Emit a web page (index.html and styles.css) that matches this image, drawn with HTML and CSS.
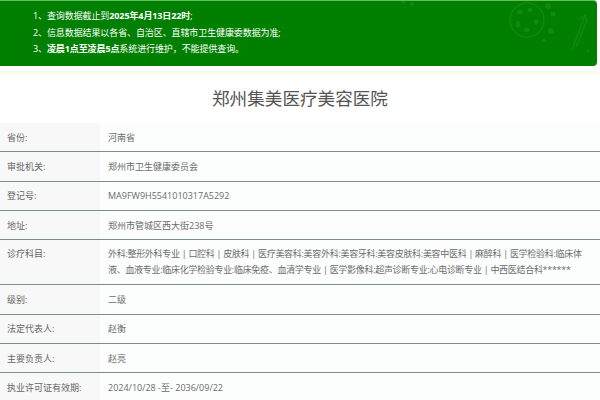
FILE: index.html
```
<!DOCTYPE html>
<html lang="zh-CN">
<head>
<meta charset="utf-8">
<title>郑州集美医疗美容医院</title>
<link rel="stylesheet" href="styles.css">
</head>
<body>
<div class="notice">
  <svg class="deco" width="600" height="66" viewBox="0 0 600 66" aria-hidden="true">
    <g fill="none" stroke="#1f8f1f" stroke-width="1.6" opacity="0.6">
      <circle cx="527" cy="20" r="17"/>
      <path d="M572 50 L584 18 M579 20 L585 15 L587 23 M576 47 L587 20"/>
    </g>
    <g fill="#1f8f1f" opacity="0.6">
      <ellipse cx="520" cy="12" rx="3" ry="2"/>
      <ellipse cx="530" cy="10" rx="2.5" ry="2"/>
      <ellipse cx="518" cy="24" rx="2.5" ry="3"/>
      <ellipse cx="527" cy="30" rx="3" ry="2"/>
      <ellipse cx="536" cy="22" rx="2" ry="3"/>
      <circle cx="548" cy="6" r="3"/>
      <circle cx="553" cy="14" r="2.5"/>
      <circle cx="551" cy="31" r="3"/>
      <circle cx="544" cy="40" r="1.5"/>
      <circle cx="588" cy="51" r="1.2"/>
      <circle cx="403" cy="2" r="2"/>
      <circle cx="412" cy="4" r="2"/>
    </g>
  </svg>
  <p class="line">1、查询数据截止到<b>2025年4月13日22时</b>;</p>
  <p class="line">2、信息数据结果以各省、自治区、直辖市卫生健康委数据为准;</p>
  <p class="line">3、<b>凌晨1点至凌晨5点</b>系统进行维护，不能提供查询。</p>
</div>
<div class="sep"></div>
<h1 class="title">郑州集美医疗美容医院</h1>
<div class="table">
  <div class="row"><div class="label">省份:</div><div class="value">河南省</div></div>
  <div class="row"><div class="label">审批机关:</div><div class="value">郑州市卫生健康委员会</div></div>
  <div class="row"><div class="label">登记号:</div><div class="value">MA9FW9H5541010317A5292</div></div>
  <div class="row"><div class="label">地址:</div><div class="value">郑州市管城区西大街238号</div></div>
  <div class="row tall"><div class="label">诊疗科目:</div><div class="value multi">外科:整形外科专业 | 口腔科 | 皮肤科 | 医疗美容科:美容外科:美容牙科:美容皮肤科:美容中医科 | 麻醉科 | 医学检验科:临床体<br>液、血液专业:临床化学检验专业:临床免疫、血清学专业 | 医学影像科:超声诊断专业:心电诊断专业 | 中西医结合科******</div></div>
  <div class="row"><div class="label">级别:</div><div class="value">二级</div></div>
  <div class="row"><div class="label">法定代表人:</div><div class="value">赵衡</div></div>
  <div class="row"><div class="label">主要负责人:</div><div class="value">赵亮</div></div>
  <div class="row last"><div class="label">执业许可证有效期:</div><div class="value">2024/10/28 -至- 2036/09/22</div></div>
</div>
</body>
</html>
```
FILE: styles.css
```
html, body {
  margin: 0;
  padding: 0;
  background: #ffffff;
}
body {
  font-family: "Open Sans", "Noto Sans CJK SC", sans-serif;
  color: #555;
}
.notice {
  position: relative;
  width: 597px;
  height: 66px;
  box-sizing: border-box;
  background: #007f00;
  border-top: 1px solid #5fbf5f;
  border-radius: 0 4px 4px 0;
  padding: 7px 0 0 33px;
  overflow: hidden;
}
.deco {
  position: absolute;
  left: 0;
  top: -1px;
}
.line {
  position: relative;
  margin: 0;
  font-size: 9px;
  line-height: 16.5px;
  color: #ffffff;
  white-space: nowrap;
  letter-spacing: -0.1px;
}
.line b {
  font-weight: 700;
}
.sep {
  height: 3px;
  margin-top: 5px;
  background: #fbfbec;
}
.title {
  margin: 0;
  height: 49px;
  line-height: 49px;
  text-align: center;
  font-size: 17.6px;
  font-weight: 400;
  color: #555;
}
.table {
  width: 600px;
}
.row {
  display: flex;
  height: 29.3px;
  box-sizing: border-box;
  border-bottom: 1px solid #7c9088;
  background: #fbfefd;
}
.row.tall {
  height: 45.3px;
}
.row.last {
  border-bottom: 1px solid #b5b5b5;
}
.label {
  width: 100px;
  flex: none;
  box-sizing: border-box;
  padding-left: 7px;
  background: #f8f8f8;
  font-size: 9px;
  color: #666;
  display: flex;
  align-items: center;
}
.tall .label {
  align-items: flex-start;
  padding-top: 7px;
}
.value {
  flex: 1;
  padding-left: 8px;
  font-size: 9px;
  color: #6c6c6c;
  display: flex;
  align-items: center;
  white-space: nowrap;
}
.value.multi {
  display: block;
  line-height: 16px;
  padding-top: 6px;
  letter-spacing: -0.3px;
}
```
